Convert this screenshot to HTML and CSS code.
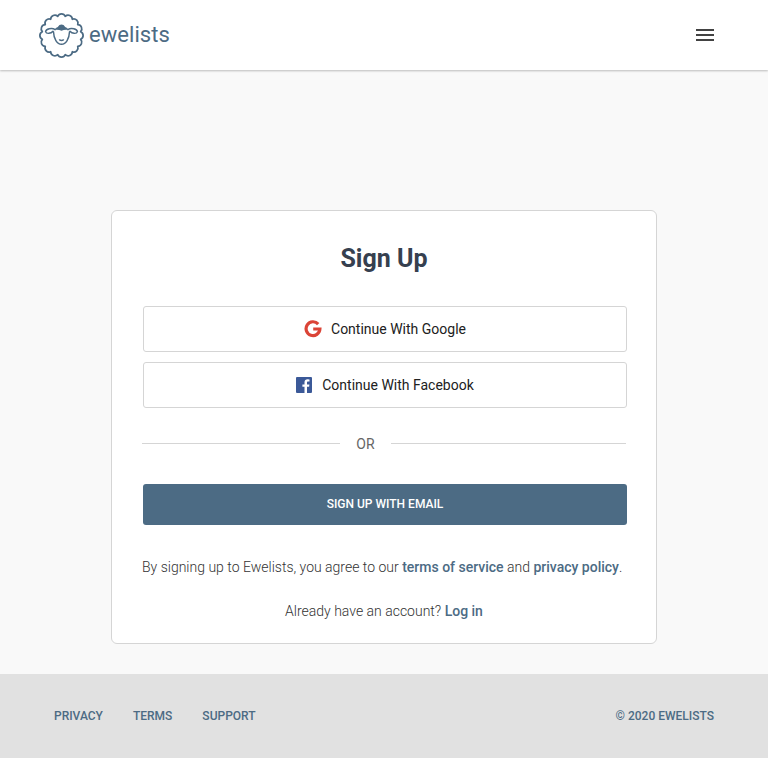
FILE: index.html
```html
<!DOCTYPE html>
<html lang="en">
<head>
<meta charset="utf-8">
<title>Sign Up - Ewelists</title>
<link rel="stylesheet" href="styles.css">
</head>
<body>
<header class="header">
  <a class="brand">
    <svg class="logo" viewBox="0 0 46 46" fill="none" stroke="currentColor" stroke-linecap="round" stroke-linejoin="round">
      <path stroke-width="1.8" d="M42.6 26.9A4.3 4.3 0 0 1 39.6 34.1A4.3 4.3 0 0 1 34.1 39.6A4.3 4.3 0 0 1 26.9 42.6A4.3 4.3 0 0 1 19.1 42.6A4.3 4.3 0 0 1 11.9 39.6A4.3 4.3 0 0 1 6.4 34.1A4.3 4.3 0 0 1 3.4 26.9A4.3 4.3 0 0 1 3.4 19.1A4.3 4.3 0 0 1 6.4 11.9A4.3 4.3 0 0 1 11.9 6.4A4.3 4.3 0 0 1 19.1 3.4A4.3 4.3 0 0 1 26.9 3.4A4.3 4.3 0 0 1 34.1 6.4A4.3 4.3 0 0 1 39.6 11.9A4.3 4.3 0 0 1 42.6 19.1A4.3 4.3 0 0 1 42.6 26.9Z"/>
      <path stroke-width="1.5" d="M16.5 17C12.8 14.3 7.2 16.6 6.7 19C7.5 21.7 12.2 21.2 14.3 18.7M29.5 17C33.2 14.3 38.8 16.6 39.3 19C38.5 21.7 33.8 21.2 31.7 18.7M14.8 19.2C15.1 26.2 18.3 32 23 32S30.9 26.2 31.2 19.2M21 27.5Q23 28.5 25 27.5"/>
      <path fill="currentColor" stroke="none" d="M15.7 17.4Q17 14.5 19.2 14.2Q20.7 11.8 23 11.8T26.8 14.2Q29 14.5 30.3 17.4Q26 16.8 23 18.2Q20 16.8 15.7 17.4Z"/>
    </svg>
    <span class="brand-name">ewelists</span>
  </a>
  <svg class="menu" viewBox="0 0 24 24" fill="#424242"><path d="M3 18h18v-2H3v2zm0-5h18v-2H3v2zm0-7v2h18V6H3z"/></svg>
</header>
<main class="main">
  <section class="card">
    <h1 class="title">Sign Up</h1>
    <button class="social google">
      <svg class="google-icon" viewBox="0 0 18 18" fill="none" stroke="#db4437" stroke-width="3.2"><path d="M14.2 4.1A6.9 6.9 0 1 0 15.9 9H9.2"/></svg>
      <span>Continue With Google</span>
    </button>
    <button class="social facebook">
      <svg class="facebook-icon" viewBox="0 0 16 16"><path fill="#3b5998" d="M1 0h14a1 1 0 0 1 1 1v14a1 1 0 0 1-1 1h-4V9.8h2.1l.3-2.4H11V5.8c0-.7.2-1.2 1.2-1.2h1.3V2.4l-1.9-.1c-1.9 0-3.1 1.1-3.1 3.2v1.9H6.4v2.4h2.1V16H1a1 1 0 0 1-1-1V1a1 1 0 0 1 1-1z"/></svg>
      <span>Continue With Facebook</span>
    </button>
    <div class="divider"><span>OR</span></div>
    <button class="email">SIGN UP WITH EMAIL</button>
    <p class="note terms">By signing up to Ewelists, you agree to our <a>terms of service</a> and <a>privacy policy</a>.</p>
    <p class="note login">Already have an account? <a>Log in</a></p>
  </section>
</main>
<footer class="footer">
  <nav class="links"><a>PRIVACY</a><a>TERMS</a><a>SUPPORT</a></nav>
  <span>© 2020 EWELISTS</span>
</footer>
</body>
</html>
```
FILE: styles.css
```css
* { box-sizing: border-box; }
body {
  margin: 0;
  height: 758px;
  display: flex;
  flex-direction: column;
  background: #f9f9f9;
  color: #333;
  font-family: Roboto, sans-serif;
  font-weight: 300;
  font-size: 14px;
}
.header {
  height: 70px;
  flex: none;
  display: flex;
  align-items: center;
  justify-content: space-between;
  padding: 0 51px 0 39px;
  background: #fff;
  box-shadow: 0 1px 2px rgba(0, 0, 0, .25);
}
.brand { display: flex; align-items: center; color: #4c6b84; }
.logo { width: 45px; height: 45px; margin-top: 1px; }
.brand-name { margin-left: 5px; font-size: 22px; line-height: 26px; font-weight: 400; letter-spacing: .05px; }
.menu { width: 24px; height: 24px; }
.main { height: 604px; flex: none; padding-top: 140px; }
.card {
  width: 546px;
  height: 434px;
  margin: 0 auto;
  padding: 0 29px 0 31px;
  border: 1px solid #d5d5d5;
  border-radius: 6px;
  background: #fff;
}
.title {
  margin: 30px 2px 30px 0;
  text-align: center;
  color: #36404f;
  font-size: 25px;
  line-height: 35px;
  font-weight: 700;
}
button { display: flex; align-items: center; justify-content: center; width: 484px; padding: 0; font-family: inherit; }
.social {
  height: 46px;
  margin-bottom: 10px;
  border: 1px solid #d5d5d5;
  border-radius: 3px;
  background: #fff;
  color: #212121;
  font-size: 14px;
  font-weight: 400;
}
.google-icon { width: 18px; height: 18px; margin-right: 9px; }
.facebook-icon { width: 16px; height: 16px; margin-right: 10px; }
.divider {
  display: grid;
  grid-template-columns: 198px 51px 235px;
  align-items: center;
  height: 20px;
  margin: 26px 0 30px -1px;
  color: #666;
  font-weight: 400;
  text-align: center;
}
.divider::before, .divider::after { content: ""; height: 1px; margin-bottom: 1px; background: #d5d5d5; }
.email {
  height: 41px;
  padding-bottom: 2px;
  border: 0;
  border-radius: 3px;
  background: #4c6b84;
  color: #fff;
  font-size: 12px;
  font-weight: 500;
}
.note { line-height: 20px; white-space: nowrap; }
.note a { color: #4c6b84; font-weight: 500; }
.terms { margin: 32px 0 24px -1px; }
.login { margin: 0 2px 0 0; text-align: center; }
.footer {
  height: 84px;
  flex: none;
  display: flex;
  align-items: center;
  justify-content: space-between;
  padding: 0 54px;
  background: #e1e1e1;
  color: #4c6b84;
  font-size: 12px;
  font-weight: 500;
}
.links { display: flex; gap: 30px; }
```
